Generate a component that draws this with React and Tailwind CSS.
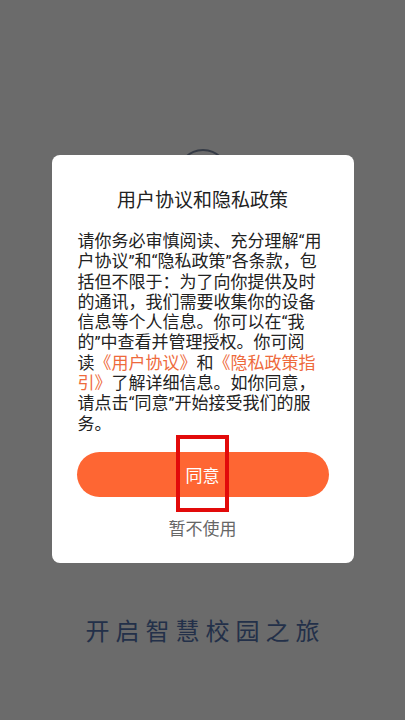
const lines = [
  [{ t: '请你务必审慎阅读、充分理解“用' }],
  [{ t: '户协议”和“隐私政策”各条款，包' }],
  [{ t: '括但不限于：为了向你提供及时' }],
  [{ t: '的通讯，我们需要收集你的设备' }],
  [{ t: '信息等个人信息。你可以在“我' }],
  [{ t: '的”中查看并管理授权。你可阅' }],
  [{ t: '读' }, { t: '《用户协议》', link: true }, { t: '和' }, { t: '《隐私政策指', link: true }],
  [{ t: '引》', link: true }, { t: '了解详细信息。如你同意，' }],
  [{ t: '请点击“同意”开始接受我们的服' }],
  [{ t: '务。' }],
]

function App() {
  return (
    <div className="relative h-[720px] w-full overflow-hidden bg-[#6b6b6b] font-['Noto_Sans_CJK_SC',sans-serif]">
      <div className="flex flex-col items-center pt-[149px]">
        <div className="h-[52px] w-[52px] rounded-full border-[2px] border-[#353b46]" />
        <div className="mt-[417px] pl-[6px] text-[24px] leading-[24px] tracking-[6px] text-[#233049]">
          开启智慧校园之旅
        </div>
      </div>

      <div className="absolute inset-0 flex items-start justify-center pt-[155px]">
        <div className="relative flex w-[302px] flex-col rounded-[8px] bg-white px-[25px] pb-[24px] pt-[31px]">
          <h2 className="text-center text-[19px] leading-[26px] text-[#222]">用户协议和隐私政策</h2>
          <div className="mt-[19px] pl-[1px] font-['Roboto','Noto_Sans_CJK_SC',sans-serif] text-[17px] leading-[20.3px] text-[#222]">
            {lines.map((line, i) => (
              <div key={i} className="whitespace-nowrap">
                {line.map((seg, j) => (
                  <span key={j} className={seg.link ? 'text-[#ee6a3c]' : ''}>
                    {seg.t}
                  </span>
                ))}
              </div>
            ))}
          </div>
          <button className="mt-[18px] h-[45px] w-full rounded-full bg-[#fe6633] text-[17px] text-white">
            同意
          </button>
          <div className="mt-[20px] text-center text-[17px] leading-[22px] text-[#666]">暂不使用</div>
          <div className="absolute left-[124px] top-[280px] h-[77px] w-[53px] border-[4px] border-[#e20a0a]" />
        </div>
      </div>
    </div>
  )
}

export default App
